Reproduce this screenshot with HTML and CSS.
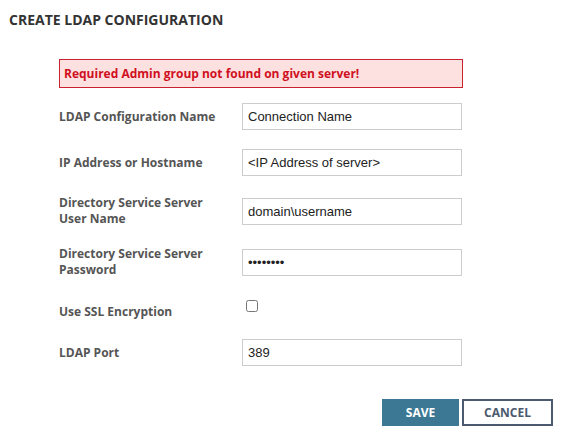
FILE: index.html
```html
<!DOCTYPE html>
<html>
<head>
<meta charset="utf-8">
<link rel="stylesheet" href="styles.css">
</head>
<body>
<div class="dialog">
  <h1 class="title">CREATE LDAP CONFIGURATION</h1>
  <div class="form">
    <div class="alert">Required Admin group not found on given server!</div>
    <div class="rows">
      <div class="row">
        <label class="label">LDAP Configuration Name</label>
        <input class="field" type="text" value="Connection Name">
      </div>
      <div class="row">
        <label class="label">IP Address or Hostname</label>
        <input class="field" type="text" value="&lt;IP Address of server&gt;">
      </div>
      <div class="row">
        <label class="label">Directory Service Server<br>User Name</label>
        <input class="field" type="text" value="domain\username">
      </div>
      <div class="row">
        <label class="label">Directory Service Server<br>Password</label>
        <input class="field" type="password" value="12345678">
      </div>
      <div class="row row-check">
        <label class="label label-check">Use SSL Encryption</label>
        <input class="check" type="checkbox">
      </div>
      <div class="row">
        <label class="label">LDAP Port</label>
        <input class="field" type="text" value="389">
      </div>
    </div>
  </div>
  <div class="actions">
    <button class="btn btn-save">SAVE</button>
    <button class="btn btn-cancel">CANCEL</button>
  </div>
</div>
</body>
</html>
```
FILE: styles.css
```css
html, body {
  margin: 0;
  padding: 0;
  background: #ffffff;
}
.dialog {
  width: 574px;
  height: 444px;
  box-sizing: border-box;
  font-family: "Open Sans", "Liberation Sans", sans-serif;
}
.title {
  margin: 0;
  padding: 10px 0 0 9px;
  font-size: 14px;
  line-height: 20px;
  font-weight: 700;
  color: #333333;
}
.form {
  margin: 29px 0 0 59px;
  width: 404px;
}
.alert {
  box-sizing: border-box;
  height: 29px;
  padding: 6px 4px 5px;
  border: 1px solid #c9212f;
  background: #fde0e0;
  color: #d0101e;
  font-size: 12px;
  line-height: 16px;
  font-weight: 700;
}
.rows {
  margin-top: 15px;
  display: flex;
  flex-direction: column;
  gap: 19px;
}
.row {
  display: flex;
  align-items: center;
}
.row-check {
  align-items: flex-start;
}
.label {
  width: 183px;
  flex: none;
  font-size: 12px;
  line-height: 16px;
  font-weight: 700;
  color: #555555;
}
.label-check {
  padding-top: 7px;
}
.field {
  box-sizing: border-box;
  width: 220px;
  height: 27px;
  margin: 0;
  padding: 0 5px;
  border: 1px solid #cccccc;
  border-radius: 0;
  outline: none;
  font-family: "Liberation Sans", Arial, sans-serif;
  font-size: 13px;
  color: #222222;
  background: #ffffff;
}
.check {
  width: 12px;
  height: 12px;
  margin: 3px 0 0 4px;
}
.actions {
  margin-top: 33px;
  padding-right: 21px;
  display: flex;
  justify-content: flex-end;
  gap: 3px;
}
.btn {
  box-sizing: border-box;
  height: 27px;
  margin: 0;
  padding: 0;
  font-family: "Open Sans", "Liberation Sans", sans-serif;
  font-size: 12px;
  font-weight: 700;
  border-radius: 0;
  cursor: pointer;
}
.btn-save {
  width: 77px;
  border: none;
  background: #3c7893;
  color: #ffffff;
}
.btn-cancel {
  width: 91px;
  border: 2px solid #4b5a6e;
  background: #ffffff;
  color: #4b5a6e;
}
```
